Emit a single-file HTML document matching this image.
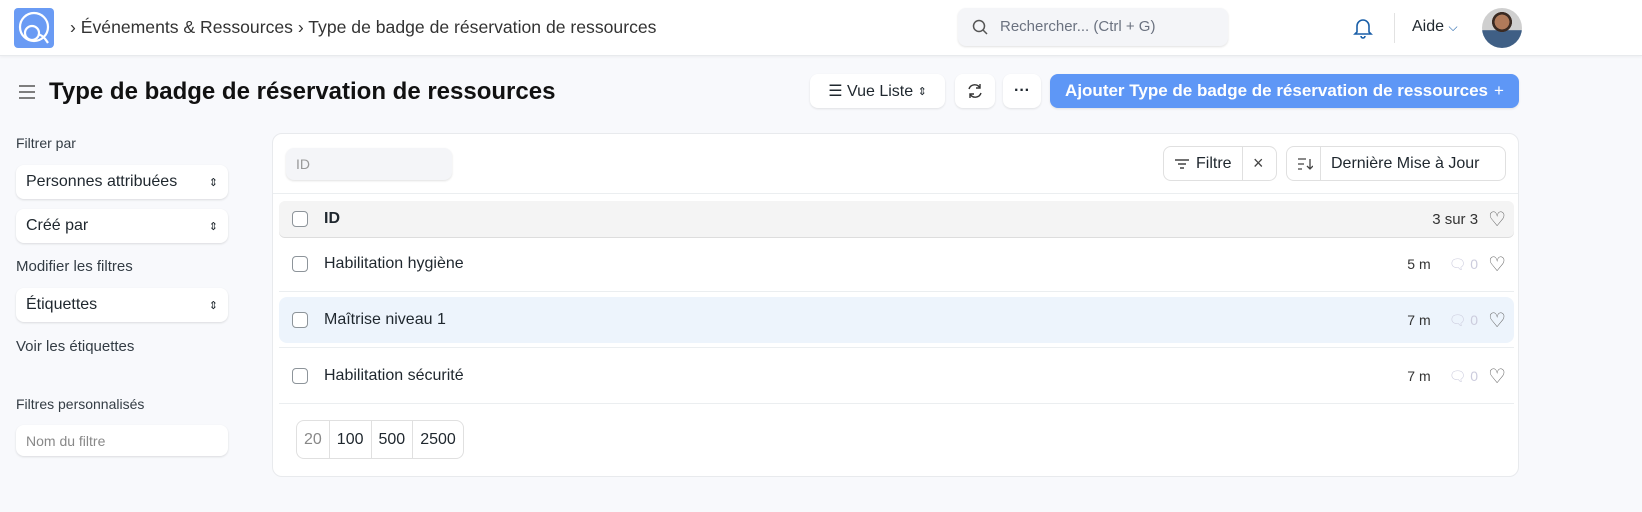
<!DOCTYPE html>
<html><head><meta charset="utf-8"><style>
*{box-sizing:border-box;margin:0;padding:0}
body{width:1642px;height:512px;background:#f8f9fc;font-family:"Liberation Sans",sans-serif;color:#1f272e;position:relative;overflow:hidden}
.a{position:absolute}
.nav{left:0;top:0;width:1642px;height:56px;background:#fff;border-bottom:1px solid #e8eaed;box-shadow:0 1px 3px rgba(0,0,0,.05)}
.btn{position:absolute;background:#fff;border-radius:8px;box-shadow:0 1px 2px rgba(0,0,0,.1);display:flex;align-items:center;justify-content:center;font-size:16px;color:#1f272e}
.sel{position:absolute;left:16px;width:212px;height:34px;background:#fff;border-radius:8px;box-shadow:0 1px 2px rgba(0,0,0,.12);font-size:16px;padding:0 10px;display:flex;align-items:center;justify-content:space-between}
.lbl{position:absolute;left:16px;font-size:14px;color:#333c44}
.row{position:absolute;left:279px;width:1235px;height:46px;display:flex;align-items:center;font-size:16px}
.cb{width:16px;height:16px;border:1px solid #8d949a;border-radius:4px;margin:0 16px 0 13px;background:#fff}
.sep{position:absolute;left:279px;width:1235px;height:1px;background:#ebeef0}
.r{position:absolute;right:0;display:flex;align-items:center;gap:10px;font-size:14px;color:#333}
</style></head><body>
<div class="a nav">
 <div class="a" style="left:14px;top:8px;width:40px;height:40px;background:#6a9bf4;border-radius:4px">
  <svg width="40" height="40" viewBox="0 0 40 40" fill="none" stroke="#fff" stroke-width="2.2"><circle cx="20" cy="19" r="14"/><circle cx="18" cy="25" r="7"/><path d="M24 26 C30 28 32 32 34 35"/></svg>
 </div>
 <div class="a" style="left:70px;top:17px;font-size:17.6px;color:#333">› Événements &amp; Ressources › Type de badge de réservation de ressources</div>
 <div class="a" style="left:958px;top:8px;width:270px;height:38px;background:#f4f5f8;border-radius:8px;box-shadow:0 1px 2px rgba(0,0,0,.12)">
  <svg class="a" style="left:14px;top:11px" width="16" height="16" viewBox="0 0 16 16" fill="none" stroke="#555" stroke-width="1.5"><circle cx="7" cy="7" r="5.5"/><path d="M11 11l4 4"/></svg>
  <div class="a" style="left:42px;top:10px;font-size:15px;color:#6b7280">Rechercher... (Ctrl + G)</div>
 </div>
 <svg class="a" style="left:1353px;top:17px" width="20" height="22" viewBox="0 0 20 22" fill="none" stroke="#1a5fa8" stroke-width="1.6"><path d="M4 15V9a6 6 0 0112 0v6l2 2H2z"/><path d="M8 19a2 2 0 004 0"/></svg>
 <div class="a" style="left:1394px;top:13px;width:1px;height:30px;background:#e2e2e2"></div>
 <div class="a" style="left:1412px;top:18px;font-size:16px">Aide <span style="color:#1a5fa8;font-size:12px">⌵</span></div>
 <div class="a" style="left:1482px;top:8px;width:40px;height:40px;border-radius:50%;background:radial-gradient(circle at 50% 35%,#b07a5a 0 22%,#3a2a22 23% 30%,transparent 31%),linear-gradient(#cfcfcf 55%,#3f5f85 56%)"></div>
</div>
<svg class="a" style="left:18px;top:83px" width="18" height="18" viewBox="0 0 18 18" stroke="#555" stroke-width="1.5"><path d="M1 3h16M1 9h16M1 15h16"/></svg>
<div class="a" style="left:49px;top:78px;font-size:24px;font-weight:bold;color:#111">Type de badge de réservation de ressources</div>
<div class="btn" style="left:810px;top:74px;width:135px;height:34px">☰&nbsp;Vue Liste&nbsp;<span style="font-size:11px">⇕</span></div>
<div class="btn" style="left:955px;top:74px;width:40px;height:34px"><svg width="18" height="18" viewBox="0 0 18 18" fill="none" stroke="#333" stroke-width="1.4"><path d="M3 7a6 6 0 0111-1M15 11a6 6 0 01-11 1"/><path d="M14 2v4h-4M4 16v-4h4"/></svg></div>
<div class="btn" style="left:1003px;top:74px;width:38px;height:34px;font-weight:bold">···</div>
<div class="btn" style="left:1050px;top:74px;width:469px;height:34px;background:#5e97f6;color:#fff;font-weight:bold;font-size:17px">Ajouter Type de badge de réservation de ressources <span style="font-weight:normal;margin-left:6px">+</span></div>

<div class="lbl" style="top:135px">Filtrer par</div>
<div class="sel" style="top:165px">Personnes attribuées <span style="font-size:11px">⇕</span></div>
<div class="sel" style="top:209px">Créé par <span style="font-size:11px">⇕</span></div>
<div class="lbl" style="top:258px;font-size:15px">Modifier les filtres</div>
<div class="sel" style="top:288px">Étiquettes <span style="font-size:11px">⇕</span></div>
<div class="lbl" style="top:338px;font-size:15px">Voir les étiquettes</div>
<div class="lbl" style="top:396px">Filtres personnalisés</div>
<div class="sel" style="top:425px;height:31px;font-size:14px;color:#888">Nom du filtre</div>

<div class="a" style="left:272px;top:133px;width:1247px;height:344px;background:#fff;border:1px solid #e8eaed;border-radius:10px"></div>
<div class="a" style="left:286px;top:148px;width:166px;height:32px;background:#f4f5f8;border-radius:8px;box-shadow:0 1px 2px rgba(0,0,0,.12);font-size:14px;color:#999;padding:8px 10px">ID</div>
<div class="btn" style="left:1163px;top:146px;width:114px;height:35px;border:1px solid #e0e0e0;box-shadow:none;justify-content:flex-start">
 <svg style="margin:0 6px 0 10px" width="16" height="14" viewBox="0 0 16 14" stroke="#444" stroke-width="1.4"><path d="M1 3h14M4 7h8M6 11h4"/></svg>Filtre
 <div class="a" style="left:78px;top:0;width:1px;height:33px;background:#e0e0e0"></div>
 <div class="a" style="left:89px;top:6px;font-size:18px;color:#444">×</div>
</div>
<div class="btn" style="left:1286px;top:146px;width:220px;height:35px;border:1px solid #e0e0e0;box-shadow:none;justify-content:flex-start">
 <svg style="margin:0 10px 0 10px" width="16" height="14" viewBox="0 0 16 14" stroke="#444" stroke-width="1.3" fill="none"><path d="M1 2h8M1 7h6M1 12h4M13 2v10M10 9l3 3 3-3"/></svg>
 <div class="a" style="left:33px;top:0;width:1px;height:33px;background:#e0e0e0"></div>
 <span style="margin-left:8px">Dernière Mise à Jour</span>
</div>
<div class="a" style="left:273px;top:193px;width:1245px;height:1px;background:#ebeef0"></div>
<div class="row" style="top:201px;height:36px;background:#f4f4f4;border-radius:6px;box-shadow:0 1px 0 #ddd;font-weight:bold"><div class="cb"></div>ID
 <div class="r" style="font-weight:normal;font-size:15px;right:8px">3 sur 3 <span style="font-size:20px;color:#666">♡</span></div></div>
<div class="row" style="top:241px"><div class="cb"></div>Habilitation hygiène<div class="r" style="right:8px">5 m <span style="color:#ccd;margin-left:8px">🗨 0</span><span style="font-size:20px;color:#666">♡</span></div></div>
<div class="sep" style="top:291px"></div>
<div class="row" style="top:297px;background:#edf4fc;border-radius:8px"><div class="cb"></div>Maîtrise niveau 1<div class="r" style="right:8px">7 m <span style="color:#ccd;margin-left:8px">🗨 0</span><span style="font-size:20px;color:#666">♡</span></div></div>
<div class="sep" style="top:347px"></div>
<div class="row" style="top:353px"><div class="cb"></div>Habilitation sécurité<div class="r" style="right:8px">7 m <span style="color:#ccd;margin-left:8px">🗨 0</span><span style="font-size:20px;color:#666">♡</span></div></div>
<div class="sep" style="top:403px"></div>
<div class="a" style="left:296px;top:420px;height:39px;border:1px solid #e0e0e0;border-radius:8px;display:flex;font-size:16px;background:#fff">
 <div style="padding:10px 7px;color:#888;border-right:1px solid #e0e0e0">20</div>
 <div style="padding:10px 7px;border-right:1px solid #e0e0e0">100</div>
 <div style="padding:10px 7px;border-right:1px solid #e0e0e0">500</div>
 <div style="padding:10px 7px">2500</div>
</div>
</body></html>
